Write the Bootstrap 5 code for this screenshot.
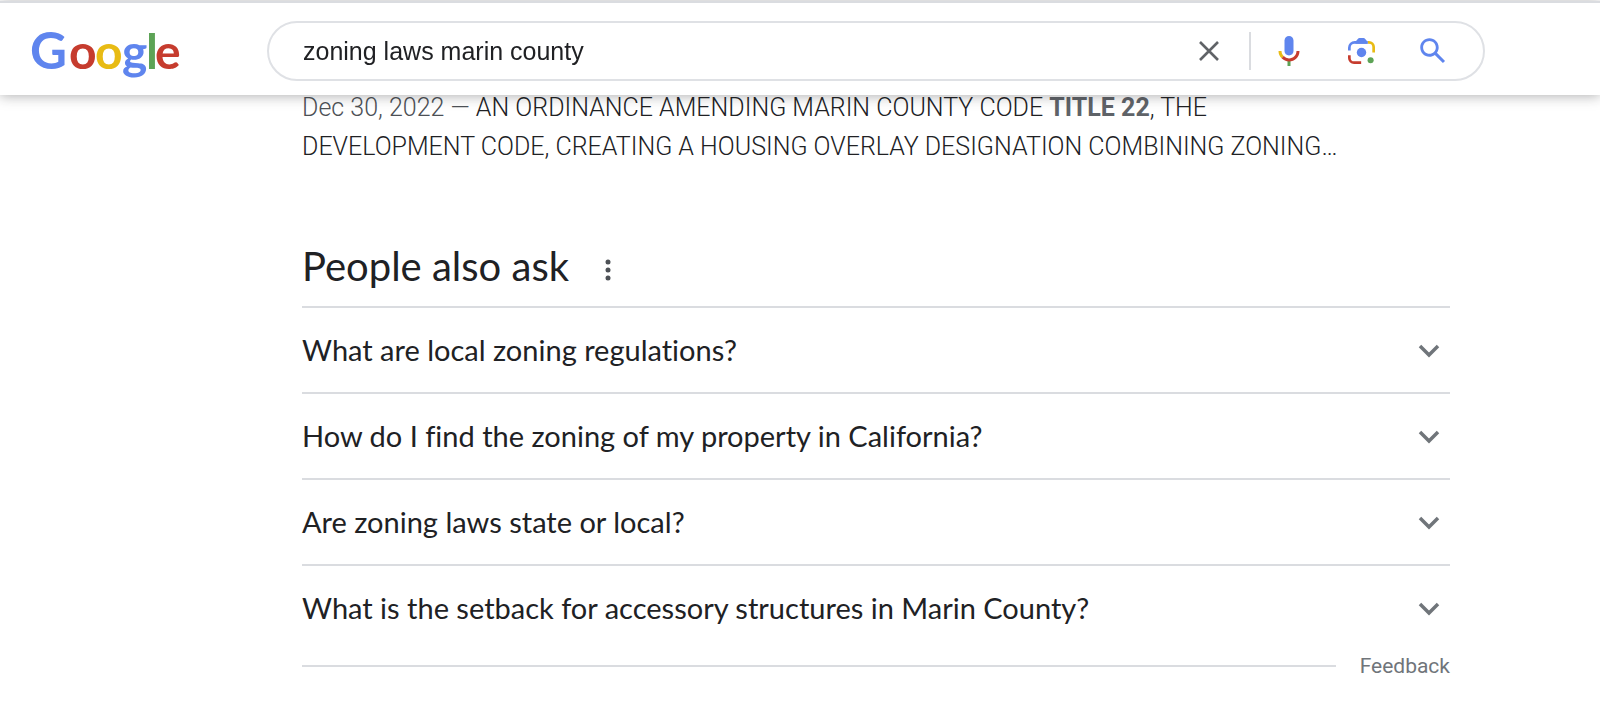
<!DOCTYPE html>
<html lang="en">
<head>
<meta charset="utf-8">
<meta name="viewport" content="width=device-width, initial-scale=1">
<title>zoning laws marin county - Google Search</title>
<link href="https://cdn.jsdelivr.net/npm/bootstrap@5.3.0/dist/css/bootstrap.min.css" rel="stylesheet">
<style>
  :root { --rule: #dadce0; --muted: #70757a; }
  body { font-family: Roboto, sans-serif; color: #202124; background: #fff; }
  .topbar { margin-top: 1px; height: 94px; padding-top: 4px; border-top: 2px solid var(--rule); box-shadow: 0 1px 12px rgba(32,33,36,.36); }
  .logo-cell { width: 267px; padding-left: 30px; }
  .wordmark { font: 700 48px Lato, sans-serif; }
  .wordmark .cap { font-size: 51px; }
  .c-blue { fill: #5f85ee; } .c-red { fill: #c63c2e; } .c-yellow { fill: #e8bb14; } .c-green { fill: #5da356; }
  .search-box { width: min(1218px, 76.125vw); height: 60px; border: 2px solid #dfe1e5; border-radius: 30px; padding: 0 30px 0 34px; }
  .search-box input { min-width: 0; font: 25px/36px "Liberation Sans", sans-serif; color: #202124; outline: 0; }
  .search-box .btn { width: 40px; height: 40px; }
  .tools { gap: 32px; }
  .divider { width: 2px; height: 38px; background: var(--rule); margin: 0 18px 0 20px; }
  .results { padding-top: 88px; }
  .column { width: min(1148px, 71.75vw); margin-left: 302px; }
  .snippet { font-size: 25px; font-weight: 300; line-height: 39px; color: #202124; white-space: nowrap; }
  .snippet b { font-weight: 700; color: #5f6368; }
  .snippet .grey { color: #4d5156; }
  .grey { color: var(--muted); }
  .ask { margin-top: 71px; }
  .ask-head { height: 69px; padding-bottom: 4px; }
  .ask-head h2 { font: 400 40px/48px Lato, sans-serif; padding-bottom: 8px; }
  .question { height: 86px; border-top: 2px solid var(--rule); font: 29px/36px Lato, sans-serif; font-variant-ligatures: none; color: #202124; padding: 0 9px 0 0; }
  .foot { height: 32px; font-size: 21px; line-height: 32px; }
  .foot-rule { height: 2px; background: var(--rule); }
</style>
</head>
<body>
<header class="topbar fixed-top bg-white d-flex align-items-center">
  <div class="logo-cell flex-shrink-0">
    <a class="d-block" href="#" aria-label="Google">
      <svg class="wordmark d-block" width="156" height="80" viewBox="0 0 156 80"><text y="58"><tspan class="cap c-blue" x="0">G</tspan><tspan class="c-red" x="39">o</tspan><tspan class="c-yellow" x="65">o</tspan><tspan class="c-blue" x="92">g</tspan><tspan class="c-green" x="116">l</tspan><tspan class="c-red" x="125">e</tspan></text></svg>
    </a>
  </div>
  <form class="search-box d-flex align-items-center" role="search" onsubmit="return false">
    <input class="flex-grow-1 border-0 p-0 bg-transparent" type="text" value="zoning laws marin county" aria-label="Search">
    <button class="btn border-0 p-0 d-flex align-items-center justify-content-center" type="button" aria-label="Clear">
      <svg width="20" height="20" viewBox="0 0 20 20" fill="none" stroke="#606367" stroke-width="2.6"><path d="M1 1l18 18M19 1L1 19"/></svg>
    </button>
    <span class="divider"></span>
    <div class="tools d-flex">
      <button class="btn border-0 p-0 d-flex align-items-center justify-content-center" type="button" aria-label="Search by voice">
        <svg width="36" height="36" viewBox="0 0 24 24"><path fill="#5f85ee" d="M12 15c1.660 0 3-1.310 3-2.970V4.980C15 3.340 13.660 2 12 2S9 3.340 9 4.980v7.050C9 13.690 10.340 15 12 15z"/><path fill="#5da356" d="M11 18.080h2V22h-2z"/><path fill="#e8bb14" d="M7.050 16.870c-1.270-1.330-2.050-2.830-2.050-4.870h2c0 1.450.56 2.420 1.470 3.380z"/><path fill="#c63c2e" d="M12 16.930a4.970 5.250 0 0 1-3.540-1.550l-1.410 1.490c1.260 1.340 3.020 2.130 4.950 2.130 3.870 0 6.990-2.920 6.990-7h-1.990c0 2.920-2.240 4.930-5 4.930z"/></svg>
      </button>
      <button class="btn border-0 p-0 d-flex align-items-center justify-content-center" type="button" aria-label="Search by image">
        <svg width="27" height="26" viewBox="0 0 80 77" fill="none" stroke-width="8"><path stroke="#e8bb14" d="M58 13h4a14 14 0 0 1 14 14v16"/><path stroke="#5f85ee" d="M4 37V29a16 16 0 0 1 16-16h38"/><path fill="#5f85ee" d="M22 11l7-8q2-3 5-3h12q3 0 5 3l7 8v6H22z"/><path stroke="#c63c2e" d="M4 51v8a14 14 0 0 0 14 14h21"/><circle fill="#5f85ee" cx="40" cy="43" r="14"/><circle fill="#5da356" cx="67" cy="66" r="9"/></svg>
      </button>
      <button class="btn border-0 p-0 d-flex align-items-center justify-content-center" type="submit" aria-label="Search">
        <svg width="34" height="34" viewBox="0 0 24 24"><path fill="#5f85ee" d="M20.490 19l-5.730-5.730C15.530 12.200 16 10.910 16 9.500 16 5.910 13.090 3 9.500 3S3 5.910 3 9.500 5.910 16 9.500 16c1.410 0 2.700-.47 3.770-1.240L19 20.490zM5 9.500C5 7.010 7.010 5 9.500 5S14 7.010 14 9.500 11.990 14 9.500 14 5 11.990 5 9.500z"/></svg>
      </button>
    </div>
  </form>
</header>

<main class="results">
  <div class="column">
    <p class="snippet mb-0"><span class="grey">Dec 30, 2022 — </span>AN ORDINANCE AMENDING MARIN COUNTY CODE <b>TITLE 22</b>, THE<br>DEVELOPMENT CODE, CREATING A HOUSING OVERLAY DESIGNATION COMBINING ZONING…</p>
    <section class="ask">
      <div class="ask-head d-flex align-items-center">
        <h2 class="m-0">People also ask</h2>
        <button class="btn border-0 p-0 ms-4 d-flex" type="button" aria-label="About this result">
          <svg width="32" height="32" viewBox="0 0 32 32" fill="#4d5156"><circle cx="15" cy="8" r="2.500"/><circle cx="15" cy="16" r="2.500"/><circle cx="15" cy="24" r="2.500"/></svg>
        </button>
      </div>
      <button class="question btn rounded-0 border-start-0 border-end-0 border-bottom-0 w-100 d-flex align-items-center justify-content-between text-start" type="button"><span>What are local zoning regulations?</span><svg width="24" height="16" viewBox="0 0 24 16" fill="none" stroke="#70757a" stroke-width="3.500"><path d="M3 4l9 9 9-9"/></svg></button>
      <button class="question btn rounded-0 border-start-0 border-end-0 border-bottom-0 w-100 d-flex align-items-center justify-content-between text-start" type="button"><span>How do I find the zoning of my property in California?</span><svg width="24" height="16" viewBox="0 0 24 16" fill="none" stroke="#70757a" stroke-width="3.500"><path d="M3 4l9 9 9-9"/></svg></button>
      <button class="question btn rounded-0 border-start-0 border-end-0 border-bottom-0 w-100 d-flex align-items-center justify-content-between text-start" type="button"><span>Are zoning laws state or local?</span><svg width="24" height="16" viewBox="0 0 24 16" fill="none" stroke="#70757a" stroke-width="3.500"><path d="M3 4l9 9 9-9"/></svg></button>
      <button class="question btn rounded-0 border-start-0 border-end-0 border-bottom-0 w-100 d-flex align-items-center justify-content-between text-start" type="button"><span>What is the setback for accessory structures in Marin County?</span><svg width="24" height="16" viewBox="0 0 24 16" fill="none" stroke="#70757a" stroke-width="3.500"><path d="M3 4l9 9 9-9"/></svg></button>
      <div class="foot d-flex align-items-center gap-4">
        <div class="foot-rule flex-grow-1"></div>
        <a class="grey text-decoration-none" href="#">Feedback</a>
      </div>
    </section>
  </div>
</main>
<script src="https://cdn.jsdelivr.net/npm/bootstrap@5.3.0/dist/js/bootstrap.bundle.min.js"></script>
</body>
</html>
